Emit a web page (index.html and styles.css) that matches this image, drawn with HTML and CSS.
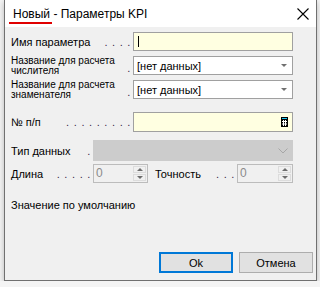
FILE: index.html
```html
<!DOCTYPE html>
<html lang="ru">
<head>
  <meta charset="UTF-8">
  <title>Параметры KPI</title>
  <link rel="stylesheet" href="styles.css">
</head>
<body>
  <div class="window">
    <div class="titlebar">
      <span class="title"><span class="mark">Новый</span> - Параметры KPI</span>
      <svg class="close" width="12" height="12" viewBox="0 0 12 12">
        <path d="M0.5 0.5 L11.5 11.5 M11.5 0.5 L0.5 11.5" stroke="#000" stroke-width="1.1" fill="none"/>
      </svg>
    </div>
    <div class="content">
      <div class="form">
        <div class="row r1">
          <div class="label"><span>Имя параметра</span><span class="dots">....</span></div>
          <div class="field input yellow"><span class="caret"></span></div>
        </div>
        <div class="row r2">
          <div class="label small"><span class="two">Название для расчета<br>числителя</span><span class="dots">.</span></div>
          <div class="field combo"><span>[нет данных]</span><span class="arrow"></span></div>
        </div>
        <div class="row r3">
          <div class="label small"><span class="two">Название для расчета<br>знаменателя</span><span class="dots">.</span></div>
          <div class="field combo"><span>[нет данных]</span><span class="arrow"></span></div>
        </div>
        <div class="row r4">
          <div class="label"><span>№ п/п</span><span class="dots">.........</span></div>
          <div class="field input yellow calc-field">
            <svg class="calc" width="7" height="10" viewBox="0 0 7 10">
              <rect x="0" y="0" width="7" height="10" fill="#000"/>
              <rect x="1" y="1" width="5" height="1" fill="#19c8f0"/>
              <path d="M2.5 3 V9 M4.5 3 V9 M1 4.5 H6 M1 7 H6" stroke="#fff" stroke-width="1"/>
            </svg>
          </div>
        </div>
        <div class="row r5">
          <div class="label short"><span>Тип данных</span><span class="dots">.</span></div>
          <div class="field disabled">
            <svg class="chevron" width="10" height="6" viewBox="0 0 10 6">
              <path d="M0.5 0.5 L5 5 L9.5 0.5" stroke="#a6a6a6" fill="none"/>
            </svg>
          </div>
        </div>
        <div class="row r6">
          <div class="label short"><span>Длина</span><span class="dots">.....</span></div>
          <div class="spin"><span class="val">0</span><span class="btns"><span class="up"></span><span class="down"></span></span></div>
          <div class="label short second"><span>Точность</span><span class="dots">...</span></div>
          <div class="spin wide"><span class="val">0</span><span class="btns"><span class="up"></span><span class="down"></span></span></div>
        </div>
      </div>
      <div class="default-value">Значение по умолчанию</div>
      <div class="buttons">
        <button class="btn primary">Ok</button>
        <button class="btn">Отмена</button>
      </div>
    </div>
  </div>
</body>
</html>
```

FILE: styles.css
```css
body {
  margin: 0;
  background: #f4f4f4;
  font-family: "Liberation Sans", Arial, sans-serif;
  color: #000;
}
.window {
  margin-left: 4px;
  width: 313px;
  height: 281px;
  box-sizing: border-box;
  border: 1px solid #707070;
  border-top: none;
  background: #f0f0f0;
  display: flex;
  flex-direction: column;
  box-shadow: 0 2px 6px rgba(0, 0, 0, 0.25);
}
.titlebar {
  height: 27px;
  background: #fff;
  display: flex;
  align-items: center;
  justify-content: space-between;
  padding: 0 7px 0 8px;
  flex-shrink: 0;
}
.title {
  font-size: 12px;
  margin-top: 1px;
}
.mark {
  position: relative;
}
.mark::after {
  content: "";
  position: absolute;
  left: -4px;
  right: -2px;
  top: 15px;
  height: 2px;
  background: #e00000;
}
.close {
  display: block;
  margin-top: 1px;
}
.content {
  flex: 1;
  display: flex;
  flex-direction: column;
  padding: 5px 3px 7px 6px;
}
.form {
  display: flex;
  flex-direction: column;
  padding-right: 20px;
}
.row {
  display: flex;
  align-items: center;
  height: 19px;
}
.r2 { margin-top: 5px; }
.r3 { margin-top: 5px; }
.r4 { margin-top: 13px; height: 20px; }
.r5 { margin-top: 8px; height: 21px; }
.r6 { margin-top: 3px; }
.label {
  width: 122px;
  flex-shrink: 0;
  display: flex;
  align-items: center;
  justify-content: space-between;
  font-size: 11px;
}
.label .two {
  font-size: 10px;
  line-height: 9.5px;
}
.label.small .dots {
  align-self: flex-end;
  margin-bottom: 1px;
}
.label.short {
  width: 82px;
}
.label.second {
  margin-left: 7px;
}
.dots {
  letter-spacing: 4.6px;
  color: #3a2a4a;
  margin-right: -2px;
}
.field {
  flex: 1;
  height: 100%;
  box-sizing: border-box;
  border: 1px solid #a0a0a0;
  display: flex;
  align-items: center;
  font-size: 11px;
}
.yellow {
  background: #ffffe1;
}
.caret {
  width: 1px;
  height: 11px;
  background: #000;
  margin-left: 4px;
}
.calc-field {
  justify-content: flex-end;
  padding-right: 4px;
}
.calc {
  display: block;
}
.combo {
  background: #fff;
  justify-content: space-between;
  padding: 0 5px 0 3px;
}
.arrow {
  width: 0;
  height: 0;
  border-left: 3px solid transparent;
  border-right: 3px solid transparent;
  border-top: 3px solid #707070;
}
.disabled {
  background: #cccccc;
  border-color: #cccccc;
  justify-content: flex-end;
  padding-right: 4px;
}
.chevron {
  display: block;
  margin-top: 1px;
}
.spin {
  width: 55px;
  height: 100%;
  box-sizing: border-box;
  border: 1px solid #bcbcbc;
  background: #f0f0f0;
  display: flex;
  align-items: stretch;
  justify-content: space-between;
  font-size: 12px;
}
.spin.wide {
  width: 56px;
}
.val {
  color: #8a8a8a;
  padding-left: 2px;
  line-height: 17px;
}
.btns {
  width: 13px;
  margin: 1px 1px 1px 0;
  display: flex;
  flex-direction: column;
  gap: 1px;
}
.btns span {
  flex: 1;
  background: #f0f0f0;
  border: 1px solid #dcdcdc;
  display: flex;
  align-items: center;
  justify-content: center;
}
.up::before {
  content: "";
  border-left: 3px solid transparent;
  border-right: 3px solid transparent;
  border-bottom: 3px solid #6d6d6d;
}
.down::before {
  content: "";
  border-left: 3px solid transparent;
  border-right: 3px solid transparent;
  border-top: 3px solid #6d6d6d;
}
.default-value {
  font-size: 11px;
  margin-top: 16px;
}
.buttons {
  margin-top: auto;
  display: flex;
  justify-content: flex-end;
  gap: 6px;
}
.btn {
  width: 74px;
  height: 21px;
  box-sizing: border-box;
  background: #e1e1e1;
  border: 1px solid #adadad;
  font-family: "Liberation Sans", Arial, sans-serif;
  font-size: 11px;
  padding: 0;
  color: #000;
}
.btn.primary {
  border: 2px solid #0078d7;
}
```
